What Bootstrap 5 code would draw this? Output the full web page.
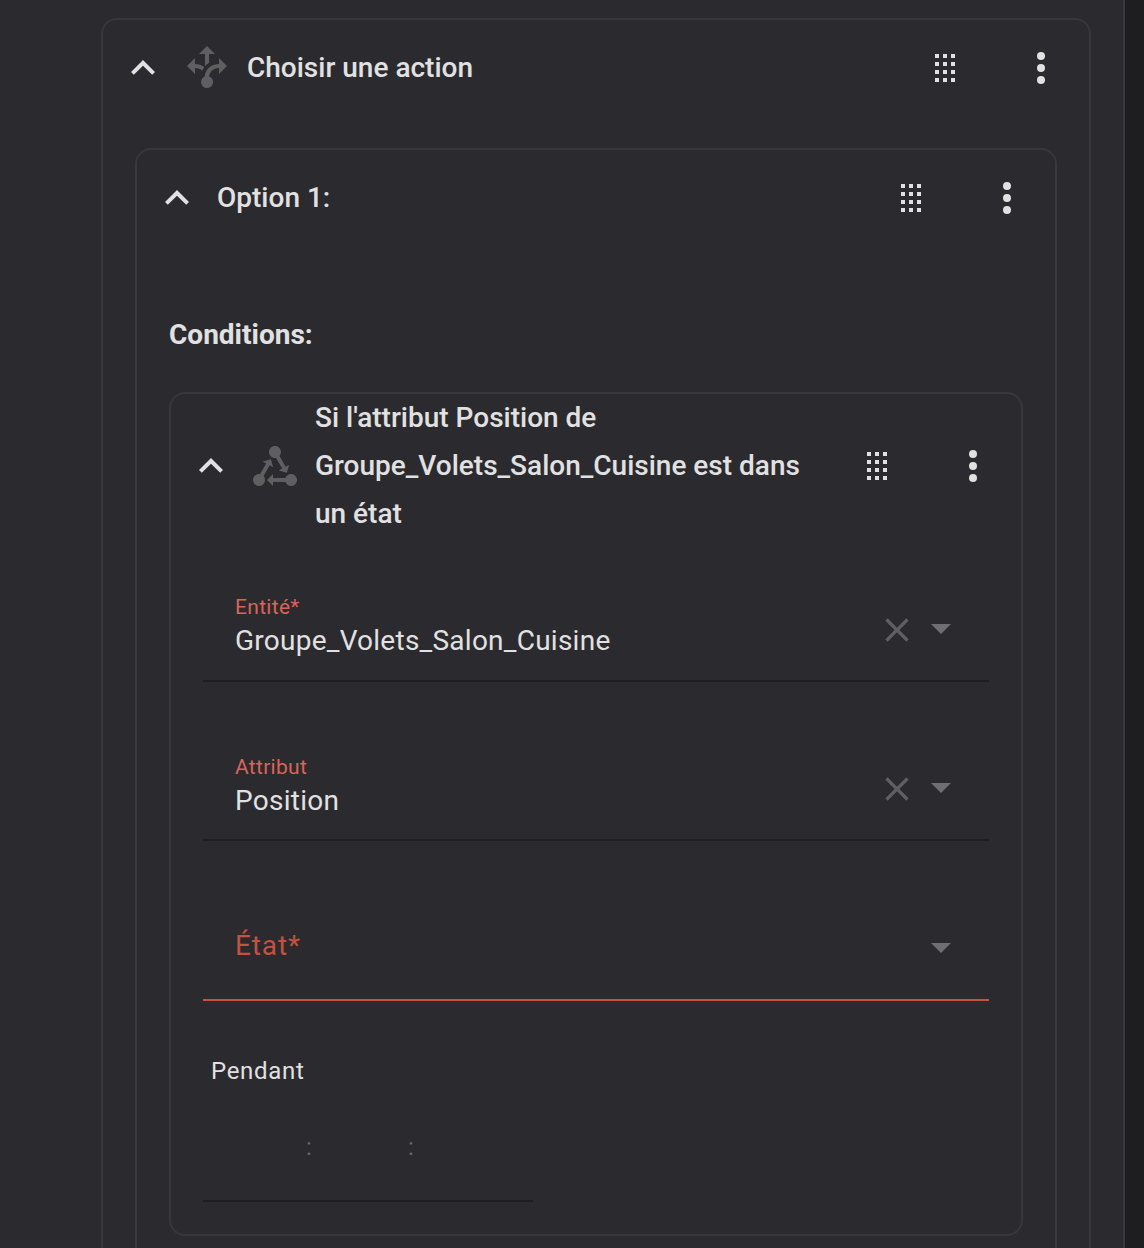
<!DOCTYPE html>
<html lang="fr">
<head>
<meta charset="utf-8">
<title>Choisir une action</title>
<link href="https://cdn.jsdelivr.net/npm/bootstrap@5.3.0/dist/css/bootstrap.min.css" rel="stylesheet">
<style>
html,body{height:1248px;overflow:hidden;background:#2b2a2e;}
body{font-family:Roboto,"Liberation Sans",sans-serif;color:#e1e1e1;}
.shell{height:1248px;overflow:hidden;}
.main-pane{width:1123px;flex:none;padding:18px 32px 0 101px;}
.side-pane{flex:1;border-left:2px solid #38373c;background:#1e1d20;}
.ha-card{background:transparent;border:2px solid #38373c;border-radius:16px;color:#e1e1e1;}
.ha-outer{padding:0 32px 200px;}
.ha-outer>.ha-head{margin:0 -32px 32px;padding:0 24px 0 16px;}
.ha-option{padding:0 32px 80px;}
.ha-option>.ha-head{margin:0 -32px 69px;padding:0 24px 0 16px;}
.ha-cond{padding:0 32px 32px;height:844px;}
.ha-cond>.ha-head{margin:0 -32px 32px;padding:0 24px 0 16px;}
.ha-head{min-height:96px;}
.ha-title{font-size:28px;font-weight:500;line-height:48px;}
.ha-title-wrap{width:500px;}
.ha-heading{font-size:28px;font-weight:700;line-height:40px;margin-bottom:37px;}
.ico{width:48px;height:48px;flex:none;fill:#e1e1e1;display:block;}
.ico-dim{fill:#5f5f61;}
.ico-x{width:40px;height:40px;fill:#5f5f61;flex:none;display:block;margin-top:3px;}
.ico-caret{width:48px;height:48px;fill:#6f6f71;flex:none;display:block;margin:-1px 24px 0 0;}
.ha-field{height:112px;border-bottom:2px solid #1e1d20;padding:7px 0 0 32px;margin-bottom:48px;}
.ha-label{font-size:21px;line-height:25px;color:#d8645a;letter-spacing:.3px;}
.ha-value{font-size:28px;line-height:40px;letter-spacing:.25px;color:#e1e1e1;padding-top:1px;}
.ha-big-label{font-size:28px;line-height:40px;letter-spacing:.9px;color:#c5513f;margin-top:-3px;}
.ha-field-err{border-bottom-color:#c5513f;margin-bottom:48px;}
.ha-pendant{font-size:24px;line-height:36px;letter-spacing:.7px;padding-left:8px;margin-top:4px;}
.ha-time{width:330px;height:89px;border-bottom:2px solid #1e1d20;margin-top:24px;padding:0 0 41px 103px;}
.ha-colon{font-size:24px;line-height:24px;color:#68686b;width:102px;}
</style>
</head>
<body>
<svg width="0" height="0" class="position-absolute">
<defs>
<symbol id="i-up" viewBox="0 0 24 24"><path d="M7.41,15.41L12,10.83L16.59,15.41L18,14L12,8L6,14L7.41,15.41Z"/></symbol>
<symbol id="i-drag" viewBox="0 0 24 24"><path d="M7,19V17H9V19H7M11,19V17H13V19H11M15,19V17H17V19H15M7,15V13H9V15H7M11,15V13H13V15H11M15,15V13H17V15H15M7,11V9H9V11H7M11,11V9H13V11H11M15,11V9H17V11H15M7,7V5H9V7H7M11,7V5H13V7H11M15,7V5H17V7H15Z"/></symbol>
<symbol id="i-dots" viewBox="0 0 24 24"><path d="M12,16A2,2 0 0,1 14,18A2,2 0 0,1 12,20A2,2 0 0,1 10,18A2,2 0 0,1 12,16M12,10A2,2 0 0,1 14,12A2,2 0 0,1 12,14A2,2 0 0,1 10,12A2,2 0 0,1 12,10M12,4A2,2 0 0,1 14,6A2,2 0 0,1 12,8A2,2 0 0,1 10,6A2,2 0 0,1 12,4Z"/></symbol>
<symbol id="i-x" viewBox="0 0 24 24"><path d="M19,6.41L17.59,5L12,10.59L6.41,5L5,6.41L10.59,12L5,17.59L6.41,19L12,13.41L17.59,19L19,17.59L13.41,12L19,6.41Z"/></symbol>
<symbol id="i-caret" viewBox="0 0 24 24"><path d="M7,10L12,15L17,10H7Z"/></symbol>
<symbol id="i-decision" viewBox="0 0 24 24"><path d="M9.64,13.4C8.63,12.5 7.34,12.03 6,12V15L2,11L6,7V10C7.67,10 9.3,10.57 10.63,11.59C10.22,12.15 9.89,12.76 9.64,13.4M18,15V12C17.5,12 13.5,12.16 13.05,16.2C14.61,16.75 15.45,18.47 14.88,20.03C14.31,21.59 12.61,22.41 11.05,21.88C9.5,21.31 8.67,19.61 9.22,18.05C9.5,17.27 10.08,16.65 10.83,16.31C11.21,11.78 15,10 18,10V7L22,11L18,15M13,5H16L12,1L8,5H11V11.12C11.58,10.44 12.46,9.77 13,9.5V5Z"/></symbol>
<symbol id="i-state" viewBox="0 0 24 24"><path d="M6.27 17.05C6.72 17.58 7 18.25 7 19C7 20.66 5.66 22 4 22S1 20.66 1 19 2.34 16 4 16C4.18 16 4.36 16 4.53 16.05L7.6 10.69L5.86 9.7L9.95 8.58L11.07 12.67L9.33 11.68L6.27 17.05M20 16C18.7 16 17.6 16.84 17.18 18H11V16L8 19L11 22V20H17.18C17.6 21.16 18.7 22 20 22C21.66 22 23 20.66 23 19S21.66 16 20 16M12 8C12.18 8 12.36 8 12.53 7.95L15.6 13.31L13.86 14.3L17.95 15.42L19.07 11.33L17.33 12.32L14.27 6.95C14.72 6.42 15 5.75 15 5C15 3.34 13.66 2 12 2S9 3.34 9 5 10.34 8 12 8Z"/></symbol>
</defs>
</svg>
<div class="shell d-flex">
  <div class="main-pane">
    <div class="card ha-card ha-outer">
      <div class="ha-head d-flex align-items-center gap-3">
        <svg class="ico"><use href="#i-up"/></svg>
        <svg class="ico ico-dim"><use href="#i-decision"/></svg>
        <div class="ha-title flex-grow-1">Choisir une action</div>
        <div class="d-flex gap-5"><svg class="ico"><use href="#i-drag"/></svg><svg class="ico"><use href="#i-dots"/></svg></div>
      </div>
      <div class="card ha-card ha-option">
        <div class="ha-head d-flex align-items-center gap-3">
          <svg class="ico"><use href="#i-up"/></svg>
          <div class="ha-title flex-grow-1">Option 1:</div>
          <div class="d-flex gap-5"><svg class="ico"><use href="#i-drag"/></svg><svg class="ico"><use href="#i-dots"/></svg></div>
        </div>
        <div class="ha-heading">Conditions:</div>
        <div class="card ha-card ha-cond">
          <div class="ha-head d-flex align-items-center gap-3">
            <svg class="ico"><use href="#i-up"/></svg>
            <svg class="ico ico-dim"><use href="#i-state"/></svg>
            <div class="flex-grow-1"><div class="ha-title ha-title-wrap">Si l'attribut Position de Groupe_Volets_Salon_Cuisine est dans un état</div></div>
            <div class="d-flex gap-5"><svg class="ico"><use href="#i-drag"/></svg><svg class="ico"><use href="#i-dots"/></svg></div>
          </div>
          <div class="ha-field d-flex align-items-center">
            <div class="flex-grow-1">
              <div class="ha-label">Entité*</div>
              <div class="ha-value">Groupe_Volets_Salon_Cuisine</div>
            </div>
            <svg class="ico-x"><use href="#i-x"/></svg>
            <svg class="ico-caret"><use href="#i-caret"/></svg>
          </div>
          <div class="ha-field d-flex align-items-center">
            <div class="flex-grow-1">
              <div class="ha-label">Attribut</div>
              <div class="ha-value">Position</div>
            </div>
            <svg class="ico-x"><use href="#i-x"/></svg>
            <svg class="ico-caret"><use href="#i-caret"/></svg>
          </div>
          <div class="ha-field ha-field-err d-flex align-items-center">
            <div class="flex-grow-1 ha-big-label">État*</div>
            <svg class="ico-caret"><use href="#i-caret"/></svg>
          </div>
          <div class="ha-pendant">Pendant</div>
          <div class="ha-time d-flex align-items-end">
            <div class="ha-colon">:</div>
            <div class="ha-colon">:</div>
          </div>
        </div>
      </div>
    </div>
  </div>
  <div class="side-pane"></div>
</div>
<script src="https://cdn.jsdelivr.net/npm/bootstrap@5.3.0/dist/js/bootstrap.bundle.min.js"></script>
</body>
</html>
